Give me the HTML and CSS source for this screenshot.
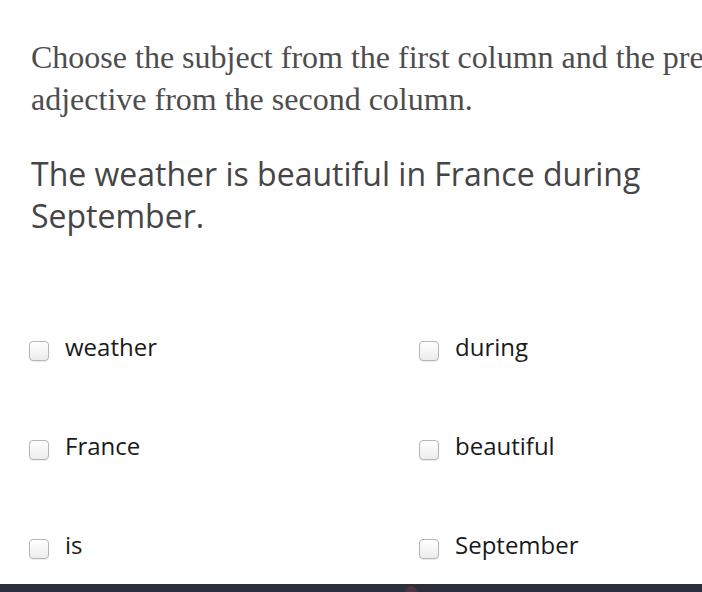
FILE: index.html
```html
<!DOCTYPE html>
<html>
<head>
<meta charset="utf-8">
<link rel="stylesheet" href="styles.css">
</head>
<body>
<div class="page">
  <main class="question">
    <p class="prompt">Choose the subject from the first column and the predicate adjective from the second column.</p>
    <p class="sentence">The weather is beautiful in France during September.</p>
    <div class="options">
      <label class="option"><span class="box"></span><span class="text">weather</span></label>
      <label class="option"><span class="box"></span><span class="text">during</span></label>
      <label class="option"><span class="box"></span><span class="text">France</span></label>
      <label class="option"><span class="box"></span><span class="text">beautiful</span></label>
      <label class="option"><span class="box"></span><span class="text">is</span></label>
      <label class="option"><span class="box"></span><span class="text">September</span></label>
    </div>
  </main>
  <footer class="footer"><span class="dot"></span></footer>
</div>
</body>
</html>
```
FILE: styles.css
```css
html, body {
  margin: 0;
  padding: 0;
  background: #ffffff;
  overflow: hidden;
}
.page {
  width: 702px;
  height: 592px;
  display: flex;
  flex-direction: column;
  overflow: hidden;
}
.question {
  flex: 1;
  min-height: 0;
  overflow: hidden;
  padding: 36px 0 0 31px;
}
.prompt {
  margin: 0;
  width: 820px;
  font-family: "Liberation Serif", serif;
  font-size: 32px;
  line-height: 42px;
  color: #4d4d4d;
}
.sentence {
  margin: 33px 0 0 0;
  width: 640px;
  font-family: "Open Sans", sans-serif;
  font-size: 32px;
  line-height: 42px;
  color: #454545;
}
.options {
  display: grid;
  grid-template-columns: 390px 290px;
  grid-auto-rows: 32px;
  row-gap: 67px;
  margin: 94px 0 0 -2px;
}
.option {
  display: flex;
  align-items: flex-start;
  font-family: "Open Sans", sans-serif;
  font-size: 24px;
  line-height: 32px;
  color: #1a1a1a;
}
.box {
  width: 18px;
  height: 18px;
  margin-top: 10px;
  border: 1px solid #b5b5b5;
  border-radius: 4px;
  background: linear-gradient(#ffffff, #ececec);
  box-shadow: 0 1px 1px rgba(0,0,0,0.08);
  flex: none;
}
.text {
  margin-left: 16px;
}
.footer {
  flex: none;
  height: 8px;
  background: #2b2e3b;
  position: relative;
}
.dot {
  position: absolute;
  left: 405px;
  top: 2px;
  width: 12px;
  height: 6px;
  border-radius: 6px 6px 0 0;
  background: #4a3540;
}
```
